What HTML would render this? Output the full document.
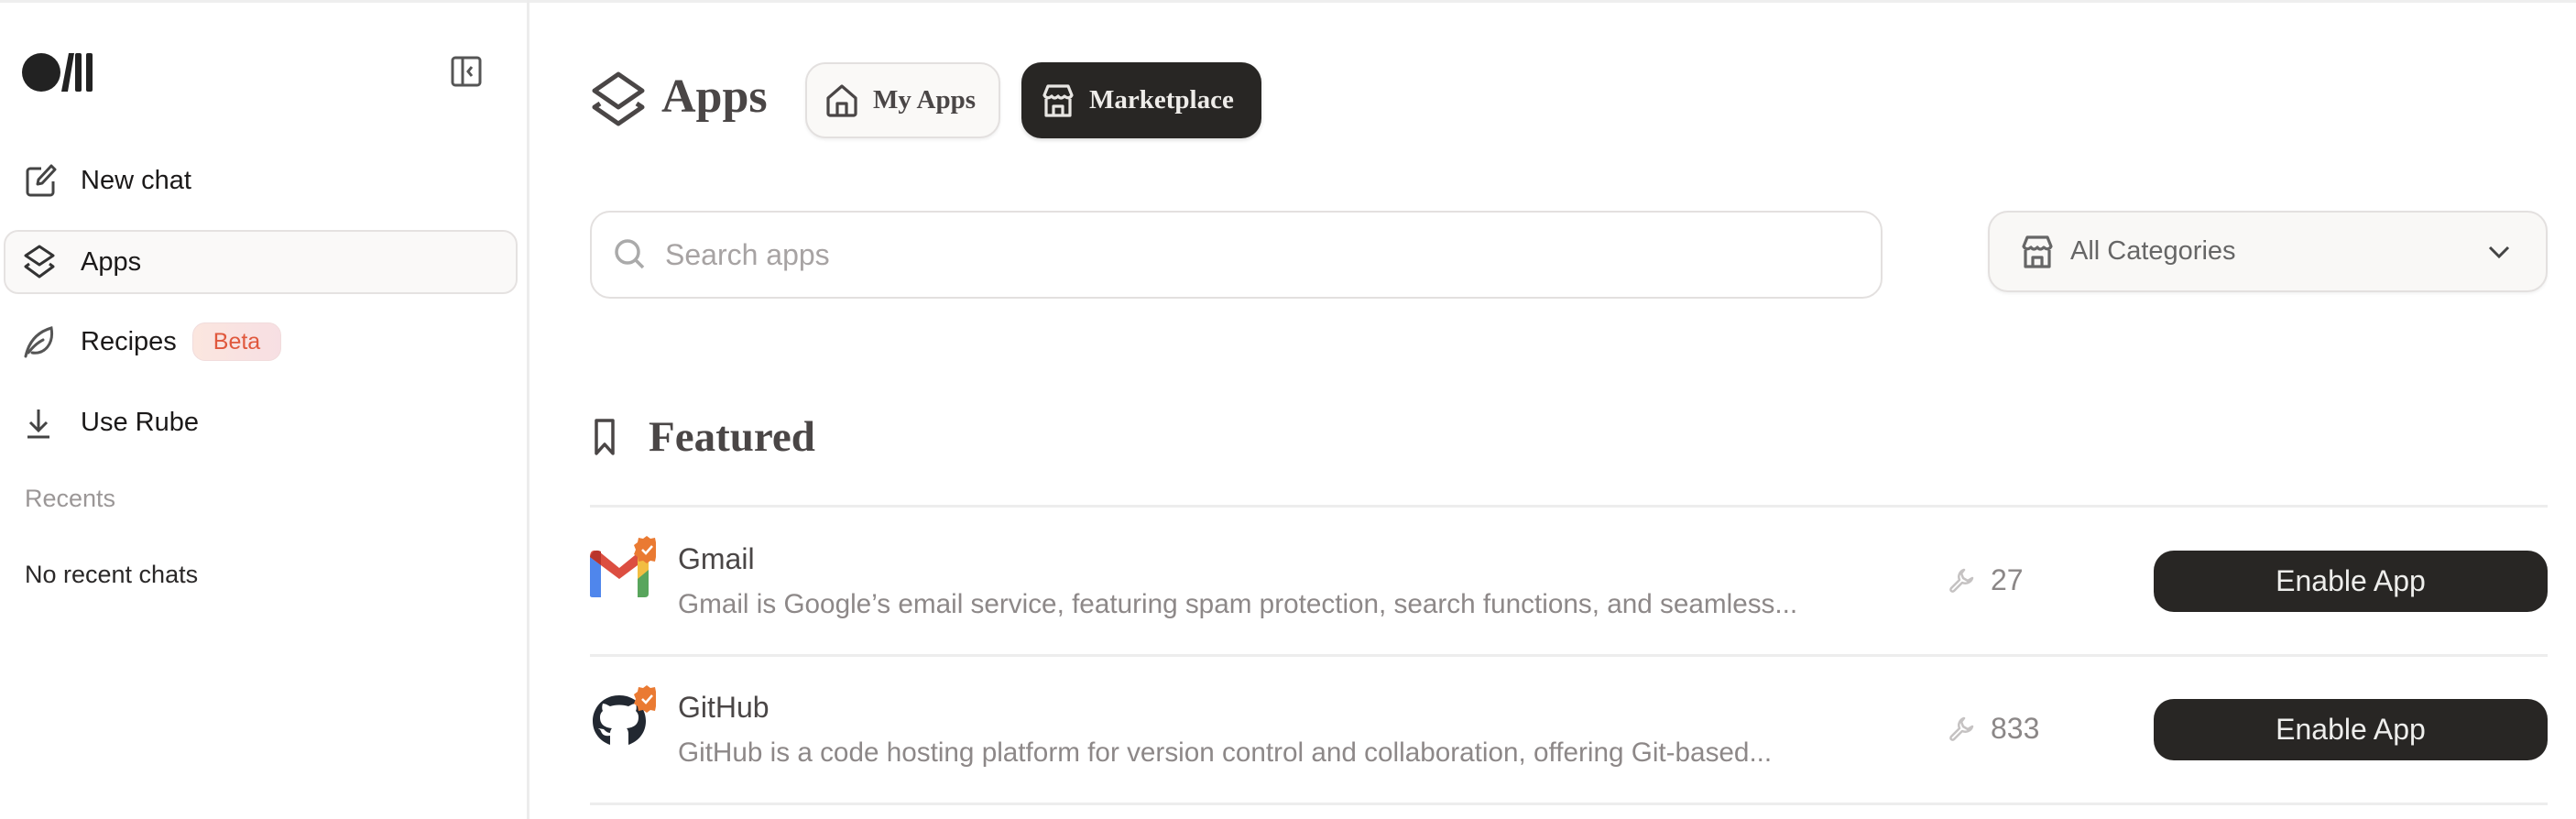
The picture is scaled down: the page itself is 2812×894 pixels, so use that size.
<!DOCTYPE html>
<html><head><meta charset="utf-8"><style>
*{box-sizing:border-box;margin:0;padding:0}
body{width:2812px;height:894px;background:#fff;font-family:"Liberation Sans",sans-serif;position:relative;overflow:hidden;color:#1d1b1b}
.abs{position:absolute}
.topline{left:0;top:0;width:2812px;height:3px;background:#eeeeee}
.side{left:0;top:0;width:578px;height:894px;border-right:3px solid #ececec}
.nav{position:absolute;left:88px;font-size:29px;line-height:36px;color:#1b1919}
.ser{font-family:"Liberation Serif",serif;font-weight:bold}
.btn{position:absolute;border-radius:22px;display:flex;align-items:center}
.row-t{position:absolute;left:740px;font-size:32px;color:#4a4646}
.row-d{position:absolute;left:740px;font-size:29.7px;color:#8d8888}
.enable{position:absolute;left:2351px;width:430px;height:67px;background:#282624;border-radius:22px;color:#eeeeec;font-size:32px;display:flex;align-items:center;justify-content:center}
.div{position:absolute;left:644px;width:2137px;height:3px;background:#ededed}
</style></head><body>
<div class="abs topline"></div>
<div class="abs side"></div>

<svg class="abs" style="left:23px;top:55px" width="84" height="48" viewBox="0 0 84 48">
<circle cx="22" cy="24" r="21" fill="#222"/>
<path d="M44 45 L52 3 L58 3 L51 45Z" fill="#222"/>
<rect x="59" y="3" width="7" height="42" rx="2" fill="#222"/>
<rect x="71" y="3" width="7" height="42" rx="2" fill="#222"/>
</svg>
<svg class="abs" style="left:492px;top:61px" width="36" height="34" viewBox="0 0 36 34" fill="none" stroke="#555" stroke-width="3">
<rect x="2" y="2" width="30" height="30" rx="3"/><line x1="13" y1="2" x2="13" y2="32"/><path d="M23 12 L19 17 L23 22"/>
</svg>

<svg class="abs" style="left:28px;top:178px" width="36" height="38" viewBox="0 0 36 38" fill="none" stroke="#444" stroke-width="3" stroke-linejoin="round"><path d="M17 6 H5 a3 3 0 0 0-3 3 V32 a3 3 0 0 0 3 3 H27 a3 3 0 0 0 3-3 V20"/><path d="M28 3 L32 7 L18 22 L13 23 L14 18Z"/></svg>
<div class="nav" style="top:179px">New chat</div>

<div class="abs" style="left:4px;top:251px;width:561px;height:70px;background:#faf9f8;border:2px solid #e5e2e1;border-radius:16px"></div>
<svg class="abs" style="left:25px;top:266px" width="36" height="40" viewBox="0 0 36 40" fill="none" stroke="#333" stroke-width="3" stroke-linejoin="round"><path d="M18 3 L33 13 L18 23 L3 13Z"/><path d="M7 22 L3 25 L18 36 L33 25 L29 22"/></svg>
<div class="nav" style="top:268px">Apps</div>

<svg class="abs" style="left:25px;top:355px" width="34" height="36" viewBox="0 0 34 36" fill="none" stroke="#555" stroke-width="3" stroke-linecap="round"><path d="M3 34 C6 20 14 8 31 3 C34 20 24 32 10 30"/><path d="M6 30 C12 22 18 18 22 16"/></svg>
<div class="nav" style="top:355px">Recipes</div>
<div class="abs" style="left:210px;top:352px;width:97px;height:42px;border-radius:14px;background:linear-gradient(90deg,#fbe6df,#f7dfe3);border:1px solid #f1dcdc;color:#e0583d;font-size:25px;display:flex;align-items:center;justify-content:center">Beta</div>

<svg class="abs" style="left:28px;top:445px" width="28" height="34" viewBox="0 0 28 34" fill="none" stroke="#444" stroke-width="3"><path d="M14 2 V24 M5 16 L14 25 L23 16"/><line x1="2" y1="32" x2="26" y2="32"/></svg>
<div class="nav" style="top:443px">Use Rube</div>

<div class="abs" style="left:27px;top:529px;font-size:27px;color:#9b9797">Recents</div>
<div class="abs" style="left:27px;top:612px;font-size:27px;color:#2a2828">No recent chats</div>

<svg class="abs" style="left:643px;top:77px" width="64" height="64" viewBox="0 0 64 64" fill="none" stroke="#4a4646" stroke-width="5" stroke-linejoin="round"><path d="M32 4 L58 22 L32 40 L6 22Z"/><path d="M12 36 L6 40 L32 58 L58 40 L52 36"/></svg>
<div class="abs ser" style="left:722px;top:76px;font-size:52px;color:#4a4646">Apps</div>

<div class="btn" style="left:879px;top:68px;width:213px;height:83px;background:#faf9f7;border:2px solid #e3e0df;box-shadow:0 2px 3px rgba(0,0,0,.06)">
<svg style="margin-left:20px" width="36" height="38" viewBox="0 0 36 38" fill="none" stroke="#4a4646" stroke-width="3.2" stroke-linejoin="round"><path d="M3 16 L18 3 L33 16 V33 a2 2 0 0 1-2 2 H5 a2 2 0 0 1-2-2Z"/><path d="M13 35 V22 H23 V35"/></svg>
<span class="ser" style="margin-left:16px;font-size:29px;color:#4a4646">My Apps</span></div>

<div class="btn" style="left:1115px;top:68px;width:262px;height:83px;background:#282624;box-shadow:0 2px 4px rgba(0,0,0,.15)">
<svg style="margin-left:22px" width="36" height="38" viewBox="0 0 36 38" fill="none" stroke="#e8e6e3" stroke-width="3.2" stroke-linejoin="round"><path d="M7 3 H29 L33 13 Q30 18 25 14 Q21 18 18 14 Q14 18 11 14 Q6 18 3 13Z"/><path d="M5 17 V35 H31 V17"/><path d="M13 35 V25 H23 V35"/></svg>
<span class="ser" style="margin-left:16px;font-size:29px;color:#eeece9">Marketplace</span></div>

<div class="btn" style="left:644px;top:230px;width:1411px;height:96px;border:2px solid #e3e0df;background:#fff">
<svg style="margin-left:22px" width="40" height="40" viewBox="0 0 40 40" fill="none" stroke="#aaa" stroke-width="3.5"><circle cx="17" cy="17" r="12"/><path d="M26 26 L34 34"/></svg>
<span style="margin-left:18px;font-size:32px;color:#a7a3a3">Search apps</span></div>

<div class="btn" style="left:2170px;top:230px;width:611px;height:89px;background:#f9f8f6;border:2px solid #e3e0df;box-shadow:0 2px 3px rgba(0,0,0,.05)">
<svg style="margin-left:34px" width="36" height="38" viewBox="0 0 36 38" fill="none" stroke="#666" stroke-width="3.2" stroke-linejoin="round"><path d="M7 3 H29 L33 13 Q30 18 25 14 Q21 18 18 14 Q14 18 11 14 Q6 18 3 13Z"/><path d="M5 17 V35 H31 V17"/><path d="M13 35 V25 H23 V35"/></svg>
<span style="margin-left:18px;font-size:29px;color:#666">All Categories</span>
<svg style="position:absolute;right:38px" width="26" height="16" viewBox="0 0 26 16" fill="none" stroke="#444" stroke-width="3"><path d="M3 3 L13 13 L23 3"/></svg></div>

<svg class="abs" style="left:648px;top:456px" width="24" height="42" viewBox="0 0 24 42" fill="none" stroke="#4a4646" stroke-width="3.5" stroke-linejoin="round"><path d="M3 3 H21 V39 L12 29 L3 39Z"/></svg>
<div class="abs ser" style="left:708px;top:450px;font-size:47px;color:#4a4646">Featured</div>

<div class="div" style="top:551px"></div>
<div class="div" style="top:714px"></div>
<div class="div" style="top:876px"></div>

<svg class="abs" style="left:644px;top:582px" width="72" height="72" viewBox="0 0 72 72">
<path d="M0 26 L0 68 Q0 70 3 70 H12 V35Z" fill="#4f86ec"/>
<path d="M52 35 V70 H60 Q64 70 64 66 V26Z" fill="#58a55c"/>
<path d="M0 26 Q0 16 10 20 L32 38 L54 20 Q64 16 64 26 L32 50Z" fill="#dc4e41"/>
<path d="M52 21 L64 26 L64 40 L52 50Z" fill="#f2bd42"/>
<path d="M0 26 L12 35 V20 Q4 16 0 26Z" fill="#b9342b"/>
<g transform="translate(62,18)"><path d="M0-15 L4-12 L9-13 L10-8 L14-5 L12 0 L14 5 L10 8 L9 13 L4 12 L0 15 L-4 12 L-9 13 L-10 8 L-14 5 L-12 0 L-14-5 L-10-8 L-9-13 L-4-12Z" fill="#ea7a32"/><path d="M-5 0 L-1 4 L6-4" stroke="#fff" stroke-width="2.5" fill="none"/></g>
</svg>
<div class="row-t" style="top:592px">Gmail</div>
<div class="row-d" style="top:643px">Gmail is Google’s email service, featuring spam protection, search functions, and seamless...</div>
<svg class="abs" style="left:2127px;top:619px" width="28" height="28" viewBox="0 0 28 28" fill="none" stroke="#c5c2c2" stroke-width="2.5" stroke-linejoin="round"><path d="M17 3 a8 8 0 0 0-5 11 L3 23 a2 2 0 0 0 3 3 L15 17 a8 8 0 0 0 11-5 L21 15 L16 12 L14 7Z"/></svg>
<div class="abs" style="left:2173px;top:615px;font-size:32px;color:#8b8787">27</div>
<div class="enable" style="top:601px">Enable App</div>

<svg class="abs" style="left:644px;top:745px" width="72" height="72" viewBox="0 0 72 72">
<path d="M32 14 C14 14 3 28 3 42 C3 55 11 64 22 68 V58 C15 59 13 56 12 53 C11 51 10 51 9 50 L15 51 C17 53 19 55 22 55 C22 53 23 51 24 50 C15 49 11 45 11 38 C11 35 12 33 14 31 C13 29 13 26 14 23 C17 23 20 25 22 26 C28 24 36 24 42 26 C44 25 47 23 50 23 C51 26 51 29 50 31 C52 33 53 35 53 38 C53 45 49 49 40 50 C41 51 42 53 42 56 V68 C53 64 61 55 61 42 C61 28 50 14 32 14Z" fill="#222831"/>
<g transform="translate(62,18)"><path d="M0-15 L4-12 L9-13 L10-8 L14-5 L12 0 L14 5 L10 8 L9 13 L4 12 L0 15 L-4 12 L-9 13 L-10 8 L-14 5 L-12 0 L-14-5 L-10-8 L-9-13 L-4-12Z" fill="#ea7a32"/><path d="M-5 0 L-1 4 L6-4" stroke="#fff" stroke-width="2.5" fill="none"/></g>
</svg>
<div class="row-t" style="top:754px">GitHub</div>
<div class="row-d" style="top:805px">GitHub is a code hosting platform for version control and collaboration, offering Git-based...</div>
<svg class="abs" style="left:2127px;top:781px" width="28" height="28" viewBox="0 0 28 28" fill="none" stroke="#c5c2c2" stroke-width="2.5" stroke-linejoin="round"><path d="M17 3 a8 8 0 0 0-5 11 L3 23 a2 2 0 0 0 3 3 L15 17 a8 8 0 0 0 11-5 L21 15 L16 12 L14 7Z"/></svg>
<div class="abs" style="left:2173px;top:777px;font-size:32px;color:#8b8787">833</div>
<div class="enable" style="top:763px">Enable App</div>
</body></html>
